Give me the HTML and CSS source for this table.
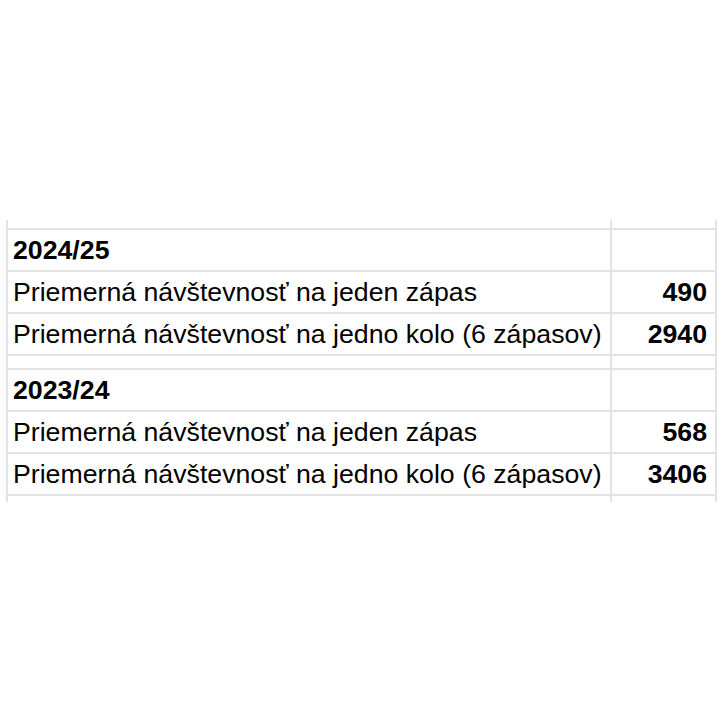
FILE: index.html
```html
<!DOCTYPE html>
<html lang="sk">
<head>
<meta charset="utf-8">
<title>Návštevnosť</title>
<link rel="stylesheet" href="styles.css">
</head>
<body>
<table class="sheet">
  <colgroup><col class="c-label"><col class="c-value"></colgroup>
  <tr class="stub"><td></td><td></td></tr>
  <tr class="row"><td class="label bold">2024/25</td><td class="value"></td></tr>
  <tr class="row"><td class="label">Priemerná návštevnosť na jeden zápas</td><td class="value">490</td></tr>
  <tr class="row"><td class="label">Priemerná návštevnosť na jedno kolo (6 zápasov)</td><td class="value">2940</td></tr>
  <tr class="gap"><td></td><td></td></tr>
  <tr class="row"><td class="label bold">2023/24</td><td class="value"></td></tr>
  <tr class="row"><td class="label">Priemerná návštevnosť na jeden zápas</td><td class="value">568</td></tr>
  <tr class="row"><td class="label">Priemerná návštevnosť na jedno kolo (6 zápasov)</td><td class="value">3406</td></tr>
  <tr class="stub end"><td></td><td></td></tr>
</table>
</body>
</html>
```
FILE: styles.css
```css
html, body {
  margin: 0;
  padding: 0;
  background: #ffffff;
}
body {
  font-family: "Liberation Sans", Arial, sans-serif;
  color: #000000;
}
.sheet {
  margin: 220px 0 0 6px;
  border-collapse: collapse;
  table-layout: fixed;
  width: 709px;
}
.c-label { width: 604px; }
.c-value { width: 105px; }
.sheet td {
  border-left: 2px solid #e3e3e3;
  border-right: 2px solid #e3e3e3;
  padding: 0;
  font-size: 26.7px;
  line-height: 30px;
  white-space: nowrap;
}
.row td {
  height: 40px;
  border-top: 2px solid #e3e3e3;
  border-bottom: 2px solid #e3e3e3;
  vertical-align: middle;
}
.stub td { height: 8px; }
.stub.end td { height: 6px; }
.gap td { height: 12px; }
.label { padding-left: 5px !important; }
.bold { font-weight: bold; }
.value {
  text-align: right;
  font-weight: bold;
  padding-right: 8px !important;
}
```
